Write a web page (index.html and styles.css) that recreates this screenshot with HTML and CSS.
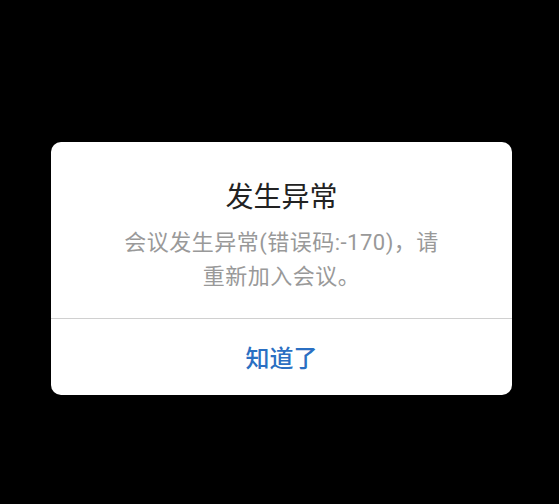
FILE: index.html
```html
<!DOCTYPE html>
<html lang="zh-CN">
<head>
<meta charset="utf-8">
<link rel="stylesheet" href="styles.css">
</head>
<body>
<div class="dialog">
  <div class="content">
    <div class="title">发生异常</div>
    <div class="message">会议发生异常(错误码:-170)，请重新加入会议。</div>
  </div>
  <div class="actions">
    <button class="btn">知道了</button>
  </div>
</div>
</body>
</html>
```
FILE: styles.css
```css
html, body {
  margin: 0;
  padding: 0;
  background: #000;
  width: 559px;
  height: 504px;
  overflow: hidden;
}
body {
  font-family: "Noto Sans CJK SC", "Noto Sans", sans-serif;
}
.dialog {
  margin: 142px 0 0 51px;
  width: 461px;
  height: 253px;
  background: #fff;
  border-radius: 10px;
  display: flex;
  flex-direction: column;
  overflow: hidden;
}
.content {
  padding: 33px 0 24px;
  border-bottom: 1px solid #d0d0d0;
  display: flex;
  flex-direction: column;
  align-items: center;
}
.title {
  font-size: 28px;
  line-height: 40px;
  color: #222;
}
.message {
  margin-top: 11px;
  width: 326px;
  text-align: center;
  font-family: Roboto, "Noto Sans CJK SC", sans-serif;
  font-size: 22px;
  letter-spacing: 0.5px;
  line-height: 34px;
  color: #999;
}
.actions {
  flex: 1;
  display: flex;
  align-items: center;
  justify-content: center;
}
.btn {
  border: 0;
  background: none;
  padding: 0;
  font-family: inherit;
  font-size: 24px;
  font-weight: 500;
  color: #2b6fc2;
  line-height: 34px;
}
```
